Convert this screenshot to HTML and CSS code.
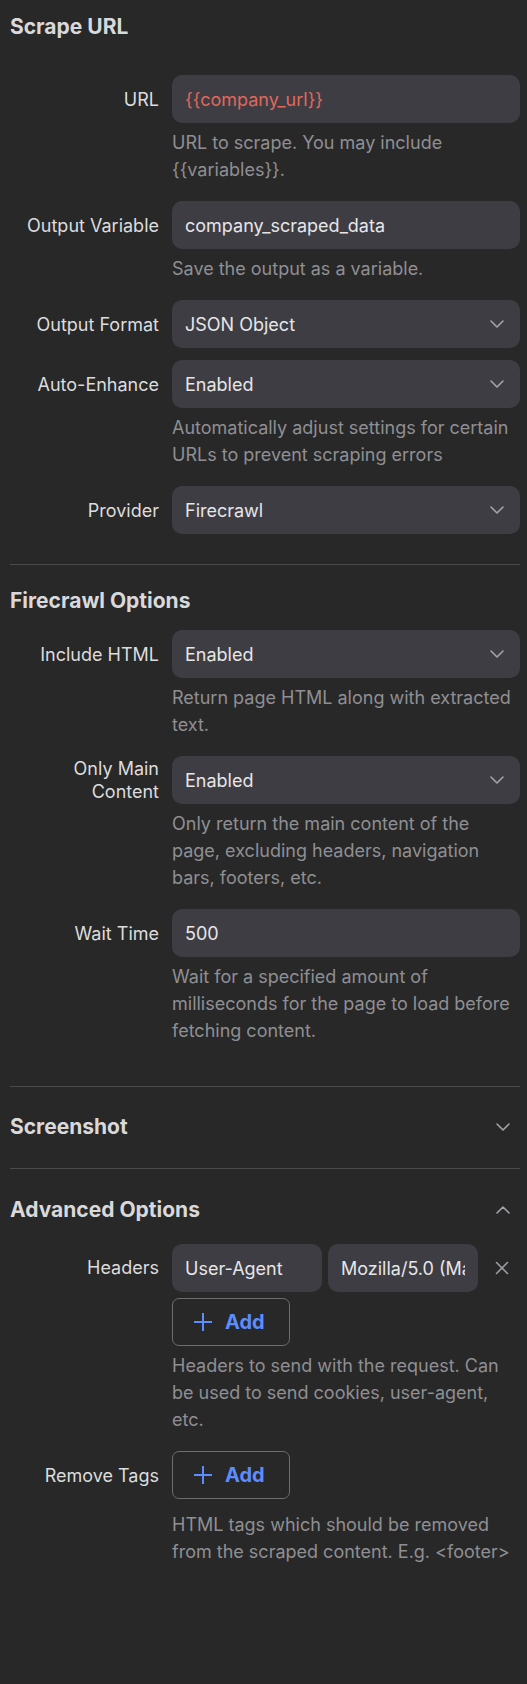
FILE: index.html
```html
<!DOCTYPE html>
<html lang="en">
<head>
<meta charset="utf-8">
<title>Scrape URL</title>
<link rel="stylesheet" href="styles.css">
</head>
<body>
<div class="panel">
  <section class="sec sec-scrape">
    <h2 class="sec-title title-first">Scrape URL</h2>
    <div class="field">
      <div class="lbl">URL</div>
      <div class="ctl box"><span class="val var">{{company_url}}</span></div>
      <p class="help">URL to scrape. You may include {{variables}}.</p>
    </div>
    <div class="field">
      <div class="lbl">Output Variable</div>
      <div class="ctl box"><span class="val">company_scraped_data</span></div>
      <p class="help">Save the output as a variable.</p>
    </div>
    <div class="field">
      <div class="lbl">Output Format</div>
      <div class="ctl box select"><span class="val">JSON Object</span>
        <svg class="chev" width="14" height="8" viewBox="0 0 14 8"><path d="M1 1l6 6 6-6" fill="none" stroke="#a3a3a8" stroke-width="1.6" stroke-linecap="round" stroke-linejoin="round"/></svg>
      </div>
    </div>
    <div class="field">
      <div class="lbl">Auto-Enhance</div>
      <div class="ctl box select"><span class="val">Enabled</span>
        <svg class="chev" width="14" height="8" viewBox="0 0 14 8"><path d="M1 1l6 6 6-6" fill="none" stroke="#a3a3a8" stroke-width="1.6" stroke-linecap="round" stroke-linejoin="round"/></svg>
      </div>
      <p class="help">Automatically adjust settings for certain URLs to prevent scraping errors</p>
    </div>
    <div class="field">
      <div class="lbl">Provider</div>
      <div class="ctl box select"><span class="val">Firecrawl</span>
        <svg class="chev" width="14" height="8" viewBox="0 0 14 8"><path d="M1 1l6 6 6-6" fill="none" stroke="#a3a3a8" stroke-width="1.6" stroke-linecap="round" stroke-linejoin="round"/></svg>
      </div>
    </div>
  </section>

  <section class="sec sec-firecrawl">
    <h2 class="sec-title title-fc">Firecrawl Options</h2>
    <div class="field">
      <div class="lbl">Include HTML</div>
      <div class="ctl box select"><span class="val">Enabled</span>
        <svg class="chev" width="14" height="8" viewBox="0 0 14 8"><path d="M1 1l6 6 6-6" fill="none" stroke="#a3a3a8" stroke-width="1.6" stroke-linecap="round" stroke-linejoin="round"/></svg>
      </div>
      <p class="help">Return page HTML along with extracted text.</p>
    </div>
    <div class="field">
      <div class="lbl">Only Main Content</div>
      <div class="ctl box select"><span class="val">Enabled</span>
        <svg class="chev" width="14" height="8" viewBox="0 0 14 8"><path d="M1 1l6 6 6-6" fill="none" stroke="#a3a3a8" stroke-width="1.6" stroke-linecap="round" stroke-linejoin="round"/></svg>
      </div>
      <p class="help">Only return the main content of the page, excluding headers, navigation bars, footers, etc.</p>
    </div>
    <div class="field">
      <div class="lbl">Wait Time</div>
      <div class="ctl box"><span class="val">500</span></div>
      <p class="help">Wait for a specified amount of milliseconds for the page to load before fetching content.</p>
    </div>
  </section>

  <section class="sec sec-collapsed">
    <div class="sec-head">
      <h2 class="sec-title">Screenshot</h2>
      <svg class="head-chev" width="14" height="8" viewBox="0 0 14 8"><path d="M1 1l6 6 6-6" fill="none" stroke="#a3a3a8" stroke-width="1.6" stroke-linecap="round" stroke-linejoin="round"/></svg>
    </div>
  </section>

  <section class="sec sec-adv">
    <div class="sec-head head-adv">
      <h2 class="sec-title">Advanced Options</h2>
      <svg class="head-chev" width="14" height="8" viewBox="0 0 14 8"><path d="M1 7l6-6 6 6" fill="none" stroke="#a3a3a8" stroke-width="1.6" stroke-linecap="round" stroke-linejoin="round"/></svg>
    </div>
    <div class="field">
      <div class="lbl lbl-top">Headers</div>
      <div class="ctl stack">
        <div class="kv">
          <div class="box kv-box"><span class="val clip">User-Agent</span></div>
          <div class="box kv-box"><span class="val clip">Mozilla/5.0 (Macintosh; Intel Mac OS X 10_15_7)</span></div>
          <div class="rm">
            <svg width="14" height="14" viewBox="0 0 14 14"><path d="M1.5 1.5l11 11M12.5 1.5l-11 11" fill="none" stroke="#9d9da2" stroke-width="1.6" stroke-linecap="round"/></svg>
          </div>
        </div>
        <div class="add">
          <svg width="20" height="20" viewBox="0 0 20 20"><path d="M10 1v18M1 10h18" fill="none" stroke="#5c8dff" stroke-width="2"/></svg>
          <span>Add</span>
        </div>
      </div>
      <p class="help">Headers to send with the request. Can be used to send cookies, user-agent, etc.</p>
    </div>
    <div class="field">
      <div class="lbl">Remove Tags</div>
      <div class="ctl">
        <div class="add">
          <svg width="20" height="20" viewBox="0 0 20 20"><path d="M10 1v18M1 10h18" fill="none" stroke="#5c8dff" stroke-width="2"/></svg>
          <span>Add</span>
        </div>
      </div>
      <p class="help help-wide">HTML tags which should be removed from the scraped content. E.g. &lt;footer&gt;</p>
    </div>
  </section>
</div>
</body>
</html>
```

FILE: styles.css
```css
* { box-sizing: border-box; }
html, body {
  margin: 0;
  padding: 0;
  background: #282828;
}
body {
  font-family: Inter, "Noto Sans", "Liberation Sans", sans-serif;
  color: #e4e4e6;
  min-height: 1684px;
}
.panel {
  padding: 0 7px 0 10px;
}
.sec {
  border-bottom: 1px solid #4a4a4c;
}
.sec-adv { border-bottom: none; }
.sec-scrape { padding-bottom: 18px; }
.sec-firecrawl { padding-bottom: 24px; }

.sec-title {
  margin: 0;
  font-size: 21px;
  line-height: 28px;
  font-weight: 700;
  color: #d9d9db;
}
.title-first { margin: 13px 0 34px; }
.title-fc { margin: 22px 0 15px; }

.sec-head {
  display: flex;
  align-items: center;
  justify-content: space-between;
  padding: 26px 10px 27px 0;
}
.head-adv { padding: 27px 10px 20px 0; }

.field {
  display: grid;
  grid-template-columns: 149px 1fr;
  column-gap: 13px;
  margin-bottom: 12px;
}
.lbl {
  grid-column: 1;
  grid-row: 1;
  align-self: center;
  text-align: right;
  font-size: 18px;
  line-height: 23px;
  color: #dcdcde;
}
.lbl-top {
  align-self: start;
  padding-top: 12px;
}
.ctl {
  grid-column: 2;
  grid-row: 1;
  min-width: 0;
}
.box {
  height: 48px;
  border-radius: 10px;
  background: #3e3d44;
  display: flex;
  align-items: center;
  padding: 0 13px;
  font-size: 18px;
  color: #e6e6e8;
}
.select { justify-content: space-between; padding-right: 16px; }
.chev { flex: none; }
.var { color: #e0685a; }
.help {
  grid-column: 2;
  grid-row: 2;
  margin: 6px 0;
  font-size: 18px;
  line-height: 27px;
  color: #8f8f93;
}
.help-wide { margin-top: 12px; }

.stack {
  display: flex;
  flex-direction: column;
  align-items: flex-start;
  gap: 6px;
}
.kv {
  display: flex;
  gap: 6px;
  width: 100%;
  align-items: center;
}
.kv-box {
  flex: 1;
  min-width: 0;
}
.clip {
  display: block;
  overflow: hidden;
  white-space: nowrap;
  width: 100%;
}
.rm {
  width: 36px;
  flex: none;
  display: flex;
  justify-content: center;
  align-items: center;
}
.add {
  width: 118px;
  height: 48px;
  border: 1px solid #6d6d70;
  border-radius: 7px;
  display: flex;
  align-items: center;
  gap: 12px;
  padding-left: 20px;
  color: #5c8dff;
  font-size: 20px;
  font-weight: 700;
}
```
